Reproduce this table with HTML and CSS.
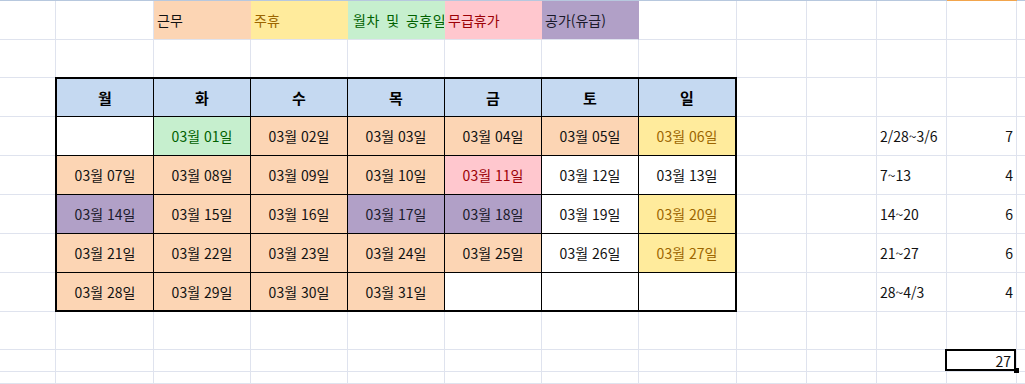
FILE: index.html
```html
<!DOCTYPE html>
<html lang="ko">
<head>
<meta charset="utf-8">
<title>근무표</title>
<link rel="stylesheet" href="styles.css">
</head>
<body>
<div class="sheet">
  <!-- row 1: legend -->
  <div class="c"></div>
  <div class="c"></div>
  <div class="c lg f-work">근무</div>
  <div class="c lg f-week">주휴</div>
  <div class="c lg f-good wide">월차 및 공휴일</div>
  <div class="c lg f-bad">무급휴가</div>
  <div class="c lg f-pur">공가(유급)</div>
  <div class="c"></div>
  <div class="c"></div>
  <div class="c"></div>
  <div class="c"></div>
  <div class="c colsel"></div>
  <div class="c e"></div>

  <!-- row 2 -->
  <div class="c"></div><div class="c"></div><div class="c"></div><div class="c"></div><div class="c"></div><div class="c"></div><div class="c"></div><div class="c"></div><div class="c"></div><div class="c"></div><div class="c"></div><div class="c"></div><div class="c e"></div>

  <!-- row 3 (calendar header row) -->
  <div class="c"></div><div class="c"></div><div class="c"></div><div class="c"></div><div class="c"></div><div class="c e"></div>

  <!-- rows 4-8: weekly summary -->
  <div class="c"></div><div class="c"></div><div class="c"></div><div class="c tl">2/28~3/6</div><div class="c tr">7</div><div class="c e"></div>
  <div class="c"></div><div class="c"></div><div class="c"></div><div class="c tl">7~13</div><div class="c tr">4</div><div class="c e"></div>
  <div class="c"></div><div class="c"></div><div class="c"></div><div class="c tl">14~20</div><div class="c tr">6</div><div class="c e"></div>
  <div class="c"></div><div class="c"></div><div class="c"></div><div class="c tl">21~27</div><div class="c tr">6</div><div class="c e"></div>
  <div class="c"></div><div class="c"></div><div class="c"></div><div class="c tl">28~4/3</div><div class="c tr">4</div><div class="c e"></div>

  <!-- row 9 -->
  <div class="c"></div><div class="c"></div><div class="c"></div><div class="c"></div><div class="c"></div><div class="c"></div><div class="c"></div><div class="c"></div><div class="c"></div><div class="c"></div><div class="c"></div><div class="c"></div><div class="c e"></div>

  <!-- row 10: total -->
  <div class="c"></div><div class="c"></div><div class="c"></div><div class="c"></div><div class="c"></div><div class="c"></div><div class="c"></div><div class="c"></div><div class="c"></div><div class="c"></div><div class="c"></div><div class="c tr sel">27</div><div class="c e"></div>

  <!-- row 11 -->
  <div class="c"></div><div class="c"></div><div class="c"></div><div class="c"></div><div class="c"></div><div class="c"></div><div class="c"></div><div class="c"></div><div class="c"></div><div class="c"></div><div class="c"></div><div class="c"></div><div class="c e"></div>

  <!-- calendar table -->
  <div class="cal">
    <div class="d hd">월</div><div class="d hd">화</div><div class="d hd">수</div><div class="d hd">목</div><div class="d hd">금</div><div class="d hd">토</div><div class="d hd">일</div>

    <div class="d"></div>
    <div class="d f-good">03월 01일</div>
    <div class="d f-work">03월 02일</div>
    <div class="d f-work">03월 03일</div>
    <div class="d f-work">03월 04일</div>
    <div class="d f-work">03월 05일</div>
    <div class="d f-week">03월 06일</div>

    <div class="d f-work">03월 07일</div>
    <div class="d f-work">03월 08일</div>
    <div class="d f-work">03월 09일</div>
    <div class="d f-work">03월 10일</div>
    <div class="d f-bad">03월 11일</div>
    <div class="d">03월 12일</div>
    <div class="d">03월 13일</div>

    <div class="d f-pur">03월 14일</div>
    <div class="d f-work">03월 15일</div>
    <div class="d f-work">03월 16일</div>
    <div class="d f-pur">03월 17일</div>
    <div class="d f-pur">03월 18일</div>
    <div class="d">03월 19일</div>
    <div class="d f-week">03월 20일</div>

    <div class="d f-work">03월 21일</div>
    <div class="d f-work">03월 22일</div>
    <div class="d f-work">03월 23일</div>
    <div class="d f-work">03월 24일</div>
    <div class="d f-work">03월 25일</div>
    <div class="d">03월 26일</div>
    <div class="d f-week">03월 27일</div>

    <div class="d f-work">03월 28일</div>
    <div class="d f-work">03월 29일</div>
    <div class="d f-work">03월 30일</div>
    <div class="d f-work">03월 31일</div>
    <div class="d"></div>
    <div class="d"></div>
    <div class="d"></div>
  </div>
</div>
</body>
</html>
```

FILE: styles.css
```css
html, body {
  margin: 0;
  padding: 0;
  background: #ffffff;
  overflow: hidden;
}

body {
  width: 1025px;
  height: 384px;
  font-family: "Noto Sans CJK KR", "Noto Sans", sans-serif;
  font-size: 14px;
  color: #111111;
}

.sheet {
  box-sizing: border-box;
  width: 1025px;
  height: 384px;
  display: grid;
  grid-template-columns: 56px 98px 97px 97px 97px 97px 97px 98px 70px 70px 70px 70px 1fr;
  grid-template-rows: 39px 38px 39px 39px 39px 39px 39px 39px 38px 22px 1fr;
  border-top: 1px solid #b7c8de;
}

.c {
  box-sizing: border-box;
  border-right: 1px solid #dfe3ee;
  border-bottom: 1px solid #dfe3ee;
  display: flex;
  align-items: center;
  white-space: nowrap;
  overflow: hidden;
  line-height: 1;
}

.c.e {
  border-right: 0;
}

.lg {
  padding-left: 3px;
  border-right-color: transparent;
}

.wide {
  padding-left: 5px;
  letter-spacing: 0.5px;
  word-spacing: 2px;
}

.tl {
  padding-left: 3px;
}

.tr {
  justify-content: flex-end;
  padding-right: 3px;
}

.colsel {
  box-shadow: 0 -1px 0 #f2a54c;
  overflow: visible;
}

.sel {
  position: relative;
  overflow: visible;
  padding-right: 5px;
}

.sel::after {
  content: "";
  position: absolute;
  left: -2px;
  top: -1px;
  right: 0;
  bottom: 0;
  border: 2px solid #000000;
}

.sel::before {
  content: "";
  position: absolute;
  right: -3px;
  bottom: -2px;
  width: 5px;
  height: 5px;
  background: #000000;
  z-index: 1;
}

/* fills (Excel styles) */
.f-work { background: #fcd5b4; color: #111111; }
.f-week { background: #ffeb9c; color: #9c6500; }
.f-good { background: #c6efce; color: #006100; }
.f-bad  { background: #ffc7ce; color: #9c0006; }
.f-pur  { background: #b1a0c7; color: #1a1a2a; }

/* calendar */
.cal {
  grid-column: 2 / 9;
  grid-row: 3 / 9;
  margin: -1px 0 0 -1px;
  border: 2px solid #000000;
  display: grid;
  grid-template-columns: repeat(6, 97px) 1fr;
  grid-template-rows: 38px repeat(4, 39px) 1fr;
  background: #ffffff;
  position: relative;
}

.d {
  border-right: 1px solid #000000;
  border-bottom: 1px solid #000000;
  display: flex;
  align-items: center;
  justify-content: center;
  white-space: nowrap;
  line-height: 1;
}

.d:nth-child(7n) {
  border-right: 0;
}

.d:nth-child(n+36) {
  border-bottom: 0;
}

.hd {
  background: #c5d9f1;
  font-weight: 700;
  color: #000000;
  font-size: 15px;
}
```
